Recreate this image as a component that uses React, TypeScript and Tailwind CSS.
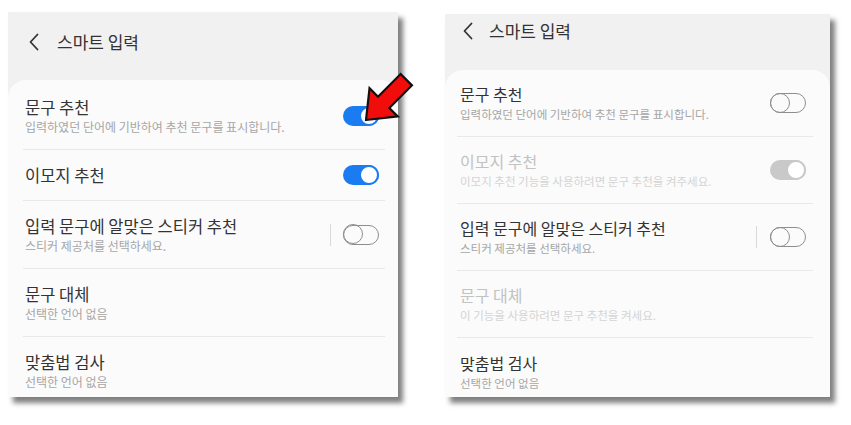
import React from "react";

type Mode = "on" | "off" | "disabledOn";

const Toggle: React.FC<{ mode: Mode }> = ({ mode }) => {
  if (mode === "on") {
    return (
      <div className="relative w-[36px] h-[20px] rounded-full bg-[#1b7cf2] shrink-0">
        <div className="absolute right-0 top-0 w-[20px] h-[20px] rounded-full bg-white border-[2px] border-[#1b7cf2]" />
      </div>
    );
  }
  if (mode === "disabledOn") {
    return (
      <div className="relative w-[36px] h-[20px] rounded-full bg-[#c9c9c9] shrink-0">
        <div className="absolute right-0 top-0 w-[20px] h-[20px] rounded-full bg-white border-[2px] border-[#c9c9c9]" />
      </div>
    );
  }
  return (
    <div className="relative w-[36px] h-[20px] rounded-full border-[1.5px] border-[#8e8e8e] shrink-0">
      <div className="absolute left-[-1.5px] top-[-1.5px] w-[20px] h-[20px] rounded-full border-[1.5px] border-[#8e8e8e]" />
    </div>
  );
};

type Row = {
  title: string;
  sub?: string;
  toggle?: Mode;
  bar?: boolean;
  disabled?: boolean;
};

const leftRows: Row[] = [
  { title: "문구 추천", sub: "입력하였던 단어에 기반하여 추천 문구를 표시합니다.", toggle: "on" },
  { title: "이모지 추천", toggle: "on" },
  { title: "입력 문구에 알맞은 스티커 추천", sub: "스티커 제공처를 선택하세요.", toggle: "off", bar: true },
  { title: "문구 대체", sub: "선택한 언어 없음" },
  { title: "맞춤법 검사", sub: "선택한 언어 없음" },
];

const rightRows: Row[] = [
  { title: "문구 추천", sub: "입력하였던 단어에 기반하여 추천 문구를 표시합니다.", toggle: "off" },
  { title: "이모지 추천", sub: "이모지 추천 기능을 사용하려면 문구 추천을 켜주세요.", toggle: "disabledOn", disabled: true },
  { title: "입력 문구에 알맞은 스티커 추천", sub: "스티커 제공처를 선택하세요.", toggle: "off", bar: true },
  { title: "문구 대체", sub: "이 기능을 사용하려면 문구 추천을 켜세요.", disabled: true },
  { title: "맞춤법 검사", sub: "선택한 언어 없음" },
];

const Chevron = () => (
  <svg width="12" height="18" viewBox="0 0 12 18" fill="none">
    <path d="M9.5 1.5 L2.5 9 L9.5 16.5" stroke="#333" strokeWidth="1.8" strokeLinecap="round" strokeLinejoin="round" />
  </svg>
);

const Arrow = () => (
  <svg
    className="absolute left-[358px] top-[72px] overflow-visible"
    width="56"
    height="56"
    viewBox="0 0 56 56"
  >
    <g transform="translate(8,48) rotate(135)">
      <polygon
        points="0,0 -25,-20 -25,-8 -57,-8 -57,8 -25,8 -25,20"
        fill="#f20d0d"
        stroke="#111"
        strokeWidth="2.2"
        strokeLinejoin="miter"
      />
    </g>
  </svg>
);

const font = { fontFamily: '"Noto Sans CJK KR", "Noto Sans", sans-serif' };

export default function App() {
  return (
    <div className="relative w-[851px] h-[425px] bg-white flex items-start pl-[8px] pt-[12px] gap-[47px]" style={font}>
      {/* left screen */}
      <div className="w-[390px] h-[385px] bg-[#f1f1f1] overflow-hidden flex flex-col shadow-[5px_6px_5px_rgba(0,0,0,0.5)]">
        <div className="h-[68px] shrink-0 flex items-center pl-[20px] pb-[8px] gap-[17px]">
          <Chevron />
          <span className="text-[17px] text-[#333]">스마트 입력</span>
        </div>
        <div className="flex-1 bg-[#fbfbfb] rounded-t-[18px] pt-[2px] pl-[15px] pr-[13px]">
          {leftRows.map((r, i) => (
            <div
              key={i}
              className={`flex items-center border-[#e9e9e9] ${i < leftRows.length - 1 ? "border-b" : ""} ${r.sub ? "h-[68px]" : "h-[51px]"}`}
            >
              <div className="flex-1 flex flex-col pl-[2px]">
                <span className="text-[16.5px] leading-[21px] text-[#333]">{r.title}</span>
                {r.sub && <span className="text-[12px] leading-[16px] mt-[1px] text-[#a6a6a6]">{r.sub}</span>}
              </div>
              {r.bar && <div className="w-px h-[22px] bg-[#d9d9d9] mr-[12px]" />}
              {r.toggle && (
                <div className="mr-[6px]">
                  <Toggle mode={r.toggle} />
                </div>
              )}
            </div>
          ))}
        </div>
      </div>

      {/* right screen */}
      <div className="mt-[2px] w-[385px] h-[383px] bg-[#f1f1f1] overflow-hidden flex flex-col shadow-[5px_6px_5px_rgba(0,0,0,0.5)]">
        <div className="h-[56px] shrink-0 flex items-center pl-[17px] pb-[22px] gap-[15px]">
          <Chevron />
          <span className="text-[17px] text-[#333]">스마트 입력</span>
        </div>
        <div className="flex-1 bg-[#fbfbfb] rounded-t-[18px] pl-[12px] pr-[17px]">
          {rightRows.map((r, i) => (
            <div
              key={i}
              className={`flex items-center h-[67px] border-[#e9e9e9] ${i < rightRows.length - 1 ? "border-b" : ""}`}
            >
              <div className="flex-1 flex flex-col pl-[3px]">
                <span className={`text-[16px] leading-[21px] ${r.disabled ? "text-[#c2c2c2]" : "text-[#333]"}`}>{r.title}</span>
                {r.sub && (
                  <span className={`text-[11.5px] leading-[16px] mt-[1px] ${r.disabled ? "text-[#d4d4d4]" : "text-[#a6a6a6]"}`}>
                    {r.sub}
                  </span>
                )}
              </div>
              {r.bar && <div className="w-px h-[22px] bg-[#d9d9d9] mr-[13px]" />}
              {r.toggle && (
                <div className="mr-[7px]">
                  <Toggle mode={r.toggle} />
                </div>
              )}
            </div>
          ))}
        </div>
      </div>

      <Arrow />
    </div>
  );
}
